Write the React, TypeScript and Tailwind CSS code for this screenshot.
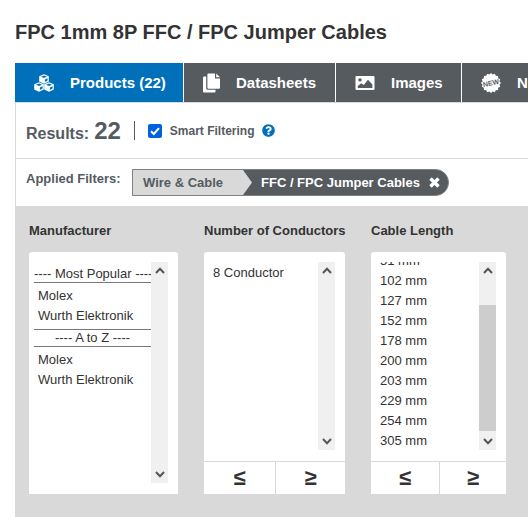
import { useEffect, useRef, type ReactNode } from "react";
import { FaQuestionCircle } from "react-icons/fa";

function CubesIcon() {
  const cubes = [
    [10, 0],
    [5, 8],
    [15, 8],
  ];
  return (
    <svg viewBox="0 0 20 18" className="h-[18px] w-5 shrink-0" aria-hidden="true">
      {cubes.map(([x, y]) => (
        <g key={`${x}-${y}`} transform={`translate(${x} ${y})`}>
          <path d="M0 0.3L4.8 2.2V7.6L0 9.8L-4.8 7.6V2.2Z" fill="currentColor" />
          <path d="M0 1.6L3 2.8L0 4L-3 2.8Z" fill="#0070bb" />
          <path d="M0.9 5.4L3.6 4.2V6.6L0.9 7.9Z" fill="#0070bb" />
        </g>
      ))}
    </svg>
  );
}

function DocumentsIcon() {
  return (
    <svg viewBox="0 0 17 20" className="h-5 w-[17px] shrink-0" aria-hidden="true">
      <path
        fill="currentColor"
        d="M1 3.5H3.2V15.2A1.6 1.6 0 0 0 4.8 16.8H12.5V18.6A1 1 0 0 1 11.5 19.6H1A1 1 0 0 1 0 18.6V4.5A1 1 0 0 1 1 3.5Z"
      />
      <path fill="currentColor" d="M5.4 0.5H12V5.5H17V14.8A1 1 0 0 1 16 15.8H5.4A1 1 0 0 1 4.4 14.8V1.5A1 1 0 0 1 5.4 0.5Z" />
      <path fill="currentColor" d="M13.2 0.5L17 4.3H13.2Z" />
    </svg>
  );
}

function ImageIcon() {
  return (
    <svg viewBox="0 0 20 16" className="h-4 w-5 shrink-0" aria-hidden="true">
      <path
        fill="currentColor"
        fillRule="evenodd"
        d="M1.5 1h17a1 1 0 0 1 1 1v12a1 1 0 0 1-1 1h-17a1 1 0 0 1-1-1V2a1 1 0 0 1 1-1ZM5 3.2a1.7 1.7 0 1 0 0 3.4a1.7 1.7 0 0 0 0-3.4ZM2.8 13h14.6V9.5L13 4.8L8.8 10L6.2 8.2L2.8 11Z"
      />
    </svg>
  );
}

function NewBadgeIcon() {
  const points = Array.from({ length: 32 }, (_, i) => {
    const r = i % 2 ? 8.6 : 10;
    const a = (i * Math.PI) / 16;
    return `${(10 + r * Math.cos(a)).toFixed(2)},${(10 + r * Math.sin(a)).toFixed(2)}`;
  }).join(" ");
  return (
    <svg viewBox="0 0 20 20" className="size-5 shrink-0" aria-hidden="true">
      <polygon points={points} fill="currentColor" />
      <text
        x="10"
        y="12.5"
        fontSize="7"
        fontWeight="bold"
        textAnchor="middle"
        fill="#565b5f"
        transform="rotate(-12 10 10)"
      >
        NEW
      </text>
    </svg>
  );
}

function Tab({ icon, label, width, active }: { icon: ReactNode; label: string; width: string; active?: boolean }) {
  return (
    <a
      href="#"
      className={`flex h-[39px] shrink-0 items-center gap-4 pl-[19px] text-[15px] leading-5 font-bold whitespace-nowrap text-white ${width} ${active ? "bg-[#0070bb]" : "bg-[#565b5f]"}`}
    >
      {icon}
      <span>{label}</span>
    </a>
  );
}

function Chevron({ down }: { down?: boolean }) {
  return (
    <svg viewBox="0 0 10 7" className="h-[7px] w-[10px]" aria-hidden="true">
      <path d={down ? "M1 1L5 5.2L9 1" : "M1 6L5 1.8L9 6"} fill="none" stroke="#555" strokeWidth="2" />
    </svg>
  );
}

function ScrollTrack({ thumb }: { thumb?: boolean }) {
  return (
    <div className="flex w-[17px] shrink-0 flex-col bg-[#f0f0f0]">
      <div className="flex h-[17px] items-center justify-center">
        <Chevron />
      </div>
      <div className="flex flex-1 flex-col justify-end">{thumb && <div className="h-[126px] bg-[#cdcdcd]" />}</div>
      <div className="flex h-[19px] items-start justify-center pt-[7px]">
        <Chevron down />
      </div>
    </div>
  );
}

type FilterProps = {
  id: string;
  label: string;
  width: string;
  height: string;
  compare?: boolean;
  scrolled?: boolean;
  children: ReactNode;
};

function FilterColumn({ id, label, width, height, compare, scrolled, children }: FilterProps) {
  const list = useRef<HTMLSelectElement>(null);
  useEffect(() => {
    if (scrolled && list.current) list.current.scrollTop = list.current.scrollHeight;
  }, [scrolled]);
  return (
    <div className={`shrink-0 ${width}`}>
      <label htmlFor={id} className="block text-[13px] leading-4 font-bold whitespace-nowrap">
        {label}
      </label>
      <div className="mt-[13px] rounded-t-[3px] bg-white">
        <div className={`flex pt-[10px] pr-[10px] pb-[11px] pl-[5px] ${compare ? "border-b border-[#d9d9d9]" : ""}`}>
          <select
            ref={list}
            id={id}
            multiple
            className={`block min-w-0 flex-1 appearance-none overflow-x-hidden overflow-y-auto rounded-none border-0 bg-white p-0 text-[13px] text-[#333] outline-none [scrollbar-width:none] ${height}`}
          >
            {children}
          </select>
          <ScrollTrack thumb={scrolled} />
        </div>
        {compare && (
          <div className="flex h-8 divide-x divide-[#d9d9d9] text-[22px] leading-8 font-bold">
            <button type="button" aria-label="Less than or equal" className="w-[51%]">
              ≤
            </button>
            <button type="button" aria-label="Greater than or equal" className="flex-1">
              ≥
            </button>
          </div>
        )}
      </div>
    </div>
  );
}

const optionClass = "block h-5 min-h-0 p-0 pt-[3px] pl-1 text-[#333]";
const lengths = ["51 mm", "102 mm", "127 mm", "152 mm", "178 mm", "200 mm", "203 mm", "229 mm", "254 mm", "305 mm"];

export default function App() {
  return (
    <div className="min-h-screen overflow-hidden bg-white pl-[15px] font-['Liberation_Sans',Arial,sans-serif] text-[#333]">
      <h1 className="pt-5 text-[20px] leading-6 font-bold">FPC 1mm 8P FFC / FPC Jumper Cables</h1>

      <nav className="mt-[19px] flex gap-px">
        <Tab active width="w-[168px]" icon={<CubesIcon />} label="Products (22)" />
        <Tab width="w-[151px]" icon={<DocumentsIcon />} label="Datasheets" />
        <Tab width="w-[125px]" icon={<ImageIcon />} label="Images" />
        <Tab width="w-[168px]" icon={<NewBadgeIcon />} label="Newest Products" />
      </nav>

      <main className="border-t border-l border-[#d9d9d9] text-[#565b5f]">
        <div className="flex h-[56px] items-center border-b border-[#d9d9d9] pl-[10px] font-bold">
          <p className="flex items-baseline gap-[5px] text-[16px]">
            Results: <span className="text-[24px] leading-8">22</span>
          </p>
          <span className="mx-[13px] h-[19px] w-px bg-[#565b5f]" />
          <input
            id="smart"
            type="checkbox"
            defaultChecked
            className="peer size-[14px] appearance-none rounded-[2px] bg-[#0060df]"
          />
          <svg viewBox="0 0 14 14" className="pointer-events-none -ml-[14px] size-[14px]" aria-hidden="true">
            <path d="M3 7.2L5.8 10L11 4.2" fill="none" stroke="white" strokeWidth="2" />
          </svg>
          <label htmlFor="smart" className="ml-2 text-[12px]">
            Smart Filtering
          </label>
          <button type="button" aria-label="Help" className="ml-[7px]">
            <FaQuestionCircle className="size-[13px] text-[#0070bb]" />
          </button>
        </div>

        <div className="flex h-[47px] pt-[10px] pl-[10px] text-[13px] font-bold">
          <p className="w-[106px] leading-5">Applied Filters:</p>
          <div className="flex h-[27px] items-stretch overflow-hidden rounded-r-full border border-[#808080] bg-[#565b5f]">
            <a href="#" className="flex w-[110px] items-center bg-[#d9d9d9] pl-[10px]">
              Wire &amp; Cable
            </a>
            <svg viewBox="0 0 9 25" className="h-full w-[9px]" aria-hidden="true">
              <path d="M0 0L9 12.5L0 25Z" fill="#d9d9d9" />
            </svg>
            <span className="flex items-center pl-[9px] text-white">FFC / FPC Jumper Cables</span>
            <button type="button" aria-label="Remove filter" className="pr-2 pl-[9px] text-white">
              <svg viewBox="0 0 11 11" className="size-[11px]" aria-hidden="true">
                <path d="M1.5 1.5L9.5 9.5M9.5 1.5L1.5 9.5" stroke="currentColor" strokeWidth="3.4" />
              </svg>
            </button>
          </div>
        </div>

        <section className="flex gap-[26px] bg-[#d9d9d9] pt-[17px] pb-[23px] pl-[13px] text-[#333]">
          <FilterColumn id="manufacturer" label="Manufacturer" width="w-[149px]" height="h-[221px]">
            <option className="block h-[21px] min-h-0 border-b border-[#777] p-0 pt-1 text-center whitespace-nowrap text-[#333]">
              ---- Most Popular ----
            </option>
            <option className={`mt-[2px] ${optionClass}`}>Molex</option>
            <option className={optionClass}>Wurth Elektronik</option>
            <option className="mt-1 block h-[18px] min-h-0 border-y border-[#777] p-0 text-center text-[#333]">
              ---- A to Z ----
            </option>
            <option className={`mt-[2px] ${optionClass}`}>Molex</option>
            <option className={optionClass}>Wurth Elektronik</option>
          </FilterColumn>

          <FilterColumn id="conductors" label="Number of Conductors" width="w-[141px]" height="h-[188px]" compare>
            <option className={optionClass}>8 Conductor</option>
          </FilterColumn>

          <FilterColumn id="length" label="Cable Length" width="w-[135px]" height="h-[188px]" compare scrolled>
            {lengths.map((length) => (
              <option key={length} className={optionClass}>
                {length}
              </option>
            ))}
          </FilterColumn>
        </section>
      </main>
    </div>
  );
}
